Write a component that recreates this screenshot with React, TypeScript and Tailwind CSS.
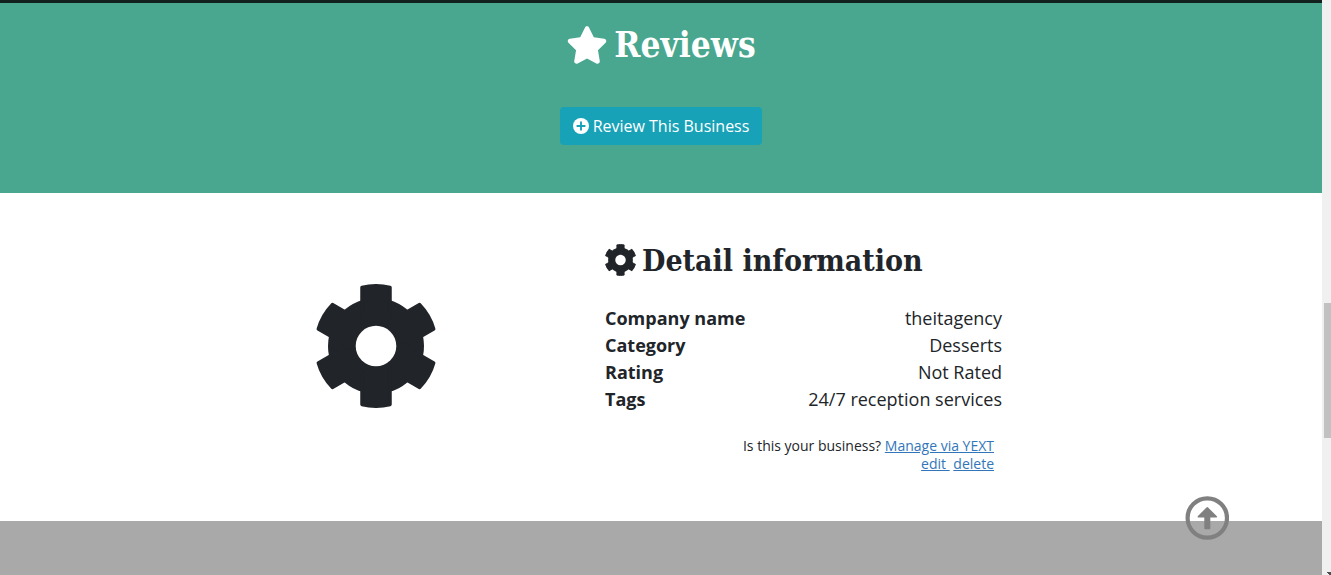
import React from "react";
import { FaStar } from "react-icons/fa6";

const details = [
  { label: "Company name", value: "theitagency" },
  { label: "Category", value: "Desserts" },
  { label: "Rating", value: "Not Rated" },
  { label: "Tags", value: "24/7 reception services" },
];

function Gear({ className }: { className: string }) {
  const tooth = "M-14 0V-58.500Q0 -62 14 -58.500V0Z";
  return (
    <svg viewBox="-60 -62 120 124" className={className} fill="currentColor" aria-hidden="true">
      <circle r="48" />
      {[0, 60, 120, 180, 240, 300].map((angle) => (
        <path
          key={angle}
          d={tooth}
          transform={`rotate(${angle})`}
          stroke="currentColor"
          strokeWidth="3.500"
          strokeLinejoin="round"
        />
      ))}
      <circle r="20.300" fill="#fff" />
    </svg>
  );
}

function PlusCircle() {
  return (
    <svg viewBox="0 0 16 16" className="size-4 shrink-0" aria-hidden="true">
      <circle cx="8" cy="8" r="8" fill="#fff" />
      <path d="M8 4.300V11.700M4.300 8H11.700" stroke="#17a2b8" strokeWidth="1.900" strokeLinecap="round" />
    </svg>
  );
}

function ArrowCircle() {
  return (
    <svg viewBox="0 0 44 44" className="size-11" aria-hidden="true">
      <circle cx="22.300" cy="22" r="19.700" fill="none" stroke="#808080" strokeWidth="4.200" />
      <path
        d="M21.500 11.400Q22.300 10.600 23.100 11.400L31.900 20.200Q32.500 21.600 31.300 21.600H25.300V32.400Q25.300 33.200 24.500 33.200H20.100Q19.300 33.200 19.300 32.400V21.600H13.300Q12.100 21.600 12.700 20.200Z"
        fill="#808080"
      />
    </svg>
  );
}

export default function App() {
  return (
    <div className="flex min-h-screen bg-white font-['Open_Sans',sans-serif] text-[#212529]">
      <main className="flex min-w-0 flex-1 flex-col">
        <section className="flex flex-col items-center border-t-3 border-[#12211d] bg-[#49a790] pt-[18px] pb-12">
          <h2 className="flex h-12 items-center gap-1.5 font-['DejaVu_Serif_Condensed','DejaVu_Serif',serif] text-[35px] font-bold text-white">
            <FaStar className="size-[42px]" aria-hidden="true" />
            Reviews
          </h2>
          <button
            type="button"
            className="mt-[38px] flex h-[38px] items-center gap-1 rounded-sm bg-[#17a2b8] px-[13px] text-base text-white"
          >
            <PlusCircle />
            Review This Business
          </button>
        </section>

        <section className="px-4 py-12">
          <div className="mx-auto flex max-w-[690px] items-start justify-between">
            <Gear className="mt-[43px] h-[124px] w-[120px] shrink-0" />
            <div className="w-[401px] pr-1">
              <h3 className="flex h-[38px] items-center gap-1.5 font-['DejaVu_Serif_Condensed','DejaVu_Serif',serif] text-[30px] font-bold whitespace-nowrap">
                <Gear className="h-8 w-[31px] shrink-0" />
                Detail information
              </h3>
              <dl className="mt-[26px] text-lg leading-[27px]">
                {details.map((item) => (
                  <div key={item.label} className="flex justify-between">
                    <dt className="font-bold">{item.label}</dt>
                    <dd>{item.value}</dd>
                  </div>
                ))}
              </dl>
              <div className="mt-6 pr-2 text-right text-sm leading-[18px]">
                <p>
                  Is this your business?{" "}
                  <a href="#manage" className="text-[#3276b9] underline">Manage via YEXT</a>
                </p>
                <p>
                  <a href="#edit" className="text-[#3276b9] underline">edit&nbsp;</a>{" "}
                  <a href="#delete" className="text-[#3276b9] underline">delete</a>
                </p>
              </div>
            </div>
          </div>
        </section>

        <footer className="min-h-[54px] flex-1 bg-[#a9a9a9]" />
      </main>

      <div className="flex w-[9px] shrink-0 flex-col bg-[#f0f0f0] pt-[303px] pl-0.5" aria-hidden="true">
        <div className="h-[135px] bg-[#c1c1c1]" />
        <svg viewBox="0 0 4 3" className="mt-auto h-[3px] w-1 self-end">
          <path d="M0 0H4V3H2V2H1V1H0Z" fill="#505050" />
        </svg>
      </div>

      <a href="#top" aria-label="Back to top" className="fixed right-[102px] bottom-[35px]">
        <ArrowCircle />
      </a>
    </div>
  );
}
